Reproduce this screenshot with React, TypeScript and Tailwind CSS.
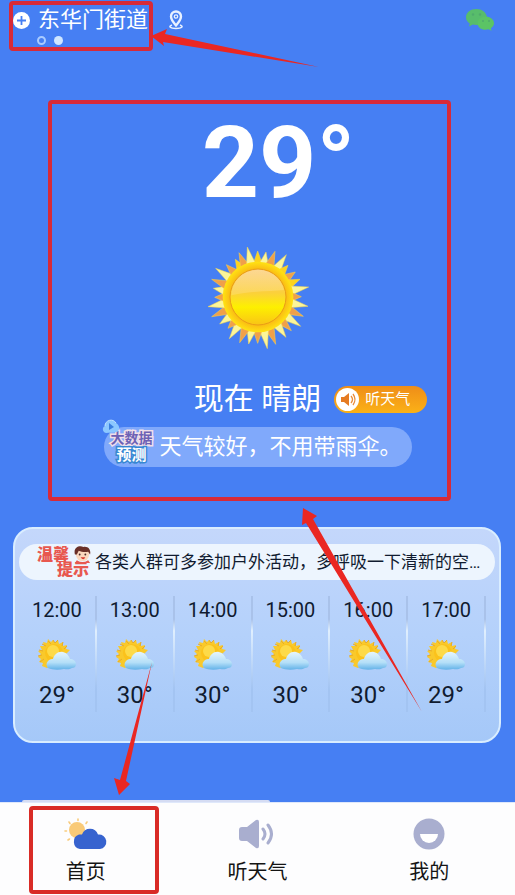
const FONT = "font-['Roboto','Noto_Sans_CJK_SC',sans-serif]";

const HOURS = [
  { time: "12:00", temp: 29 },
  { time: "13:00", temp: 30 },
  { time: "14:00", temp: 30 },
  { time: "15:00", temp: 30 },
  { time: "16:00", temp: 30 },
  { time: "17:00", temp: 29 },
];

type Ray = [number, number, string];

const PALE = "#fbf59a";
const GOLD = "#fdd31c";
const AMBER = "#f0a04a";

/* Ray tips of the big sun, clockwise, around the centre (188, 183). */
const RAYS: Ray[] = [
  [187, 45, GOLD], [212, 48, PALE], [239, 46, AMBER], [273, 56, PALE], [278, 88, GOLD],
  [300, 108, AMBER], [314, 130, GOLD], [340, 153, PALE], [318, 182, AMBER], [338, 211, PALE],
  [324, 241, AMBER], [316, 271, PALE], [288, 284, AMBER], [272, 304, PALE], [241, 325, AMBER],
  [216, 338, PALE], [187, 322, AMBER], [160, 324, PALE], [133, 320, AMBER], [102, 308, PALE],
  [98, 277, AMBER], [73, 264, PALE], [49, 242, AMBER], [38, 212, PALE], [58, 184, AMBER],
  [54, 157, PALE], [49, 130, AMBER], [61, 97, PALE], [93, 86, AMBER], [120, 70, GOLD],
  [131, 50, AMBER], [156, 33, PALE],
];

function rayPath([x, y]: Ray) {
  const a = Math.atan2(y - 183, x - 188);
  const p = (t: number, r: number) => `${(188 + r * Math.cos(t)).toFixed(1)} ${(183 + r * Math.sin(t)).toFixed(1)}`;
  return `M${p(a - 0.15, 98)}L${x} ${y}L${p(a + 0.15, 98)}Z`;
}

function BigSun() {
  return (
    <svg viewBox="26 21 324 324" className="size-[108px]" role="img" aria-label="晴朗">
      <defs>
        <radialGradient id="corona">
          <stop offset="0.75" stopColor="#f9b414" />
          <stop offset="1" stopColor="#ffe313" />
        </radialGradient>
        <linearGradient id="ember" x1="0" y1="0" x2="0" y2="1">
          <stop offset="0" stopColor="#fbcd7a" />
          <stop offset="0.42" stopColor="#fbd03c" />
          <stop offset="0.68" stopColor="#fdf000" />
          <stop offset="1" stopColor="#f9c416" />
        </linearGradient>
        <linearGradient id="shine" x1="0" y1="0" x2="0" y2="1">
          <stop offset="0" stopColor="#fff" stopOpacity="0.2" />
          <stop offset="1" stopColor="#fff" stopOpacity="0.15" />
        </linearGradient>
      </defs>
      {RAYS.map((ray) => (
        <path key={`${ray[0]}-${ray[1]}`} d={rayPath(ray)} fill={ray[2]} stroke="#fbd84a" strokeWidth="1.5" />
      ))}
      <circle cx="188" cy="183" r="106" fill="url(#corona)" />
      <circle cx="188" cy="183" r="84" fill="url(#ember)" stroke="#ea9d17" strokeWidth="3" />
      <path d="M108 178a80 78 0 0 1 158-16c-40 4-92 2-158 16Z" fill="url(#shine)" />
    </svg>
  );
}

function PartlyCloudy() {
  return (
    <svg viewBox="0 0 40 33" className="h-[33px] w-10" role="img" aria-label="多云">
      <defs>
        <linearGradient id="cloud" x1="0" y1="0" x2="0" y2="1">
          <stop offset="0" stopColor="#e6f5fd" />
          <stop offset="0.6" stopColor="#b4dff8" />
          <stop offset="1" stopColor="#63b2e8" />
        </linearGradient>
      </defs>
      <path
        d="M16 2l2 3 3-3 1 4 4-2 0 4 4-1-1 4 4 1-3 3-20 15-5-2 1-3-4-1 2-3-3-2 3-3-3-3 4-1-2-4 4 0-1-4 4 1 1-4 3 3z"
        fill="#f9c92b"
      />
      <path d="M16 2l2 3 3-3M11 3l3 3M5 6l4 2M2 12l4 1M1 18l4-1M3 24l4-3M26 4l-1 4M30 8l-3 3" stroke="#e6a92e" strokeWidth="1" fill="none" />
      <circle cx="17" cy="15" r="9" fill="#fbc21b" />
      <circle cx="16" cy="13" r="6" fill="#fdda48" />
      <path d="M11 30c-2-2-2-5 0-7 2-2 4-2 5-2 1-4 5-8 10-7 4 1 6 4 7 7 3 0 6 2 6 5s-2 4-4 4c-3 2-6 1-8 1-5 1-12 1-16-1Z" fill="url(#cloud)" />
    </svg>
  );
}

function HomeIcon() {
  return (
    <svg viewBox="0 0 44 32" className="h-8 w-11" aria-hidden="true">
      <g stroke="#f8cb7c" strokeWidth="1.6" strokeLinecap="round">
        <path d="M14 1v1.500M5 4l1 1.500M1 13h1.500M4 22l1.500-1M23 4l-1 1.500" />
      </g>
      <circle cx="13" cy="12" r="8" fill="#f9ca78" />
      <path d="M16 31a7.500 7.500 0 0 1-1-14.500h3a8.500 8.500 0 0 1 16 0 7.300 7.300 0 0 1 2 14.500Z" fill="#3763cf" />
    </svg>
  );
}

function SpeakerIcon() {
  return (
    <svg viewBox="0 0 36 32" className="h-8 w-9" aria-hidden="true">
      <path d="M3 9h5L17 2q3-1 3 2v24q0 3-3 2l-9-7H3q-3 0-3-3v-8q0-3 3-3Z" fill="#a9aecf" />
      <path d="M24 11q4 5 0 10M29 7q7 9 0 18" fill="none" stroke="#a9aecf" strokeWidth="3" strokeLinecap="round" />
    </svg>
  );
}

function SmileIcon() {
  return (
    <svg viewBox="0 0 32 32" className="size-8" aria-hidden="true">
      <circle cx="16" cy="16" r="15.500" fill="#a9aecf" />
      <path d="M7 16h18a9 9 0 0 1-18 0Z" fill="#fff" />
    </svg>
  );
}

function Header() {
  return (
    <header className="h-12 pt-2 pr-5 pl-[13px]">
      <div className="flex h-6 items-center">
        <button aria-label="添加城市" className="mr-2">
          <svg viewBox="0 0 17 17" className="size-[17px]">
            <circle cx="8.500" cy="8.500" r="8.500" fill="#fff" />
            <path d="M8.500 4v9M4 8.500h9" stroke="#467ff3" strokeWidth="1.800" />
          </svg>
        </button>
        <h1 className="text-[22px] leading-6 text-white">东华门街道</h1>
        <button aria-label="定位" className="ml-5">
          <svg viewBox="0 0 16 20" className="h-5 w-4" fill="none" stroke="#e8f1ff">
            <path d="M8 15.500C5 12 3 9.500 3 6.500a5 5 0 0 1 10 0C13 9.500 11 12 8 15.500Z" strokeWidth="2.400" />
            <circle cx="8" cy="6.500" r="1.700" strokeWidth="1.300" />
            <path d="M4 15c-4 1.500-2 3.500 4 3.500s8-2 4-3.500" strokeWidth="1.500" />
          </svg>
        </button>
        <button aria-label="微信" className="ml-auto">
          <svg viewBox="0 0 30 24" className="h-6 w-[30px]">
            <path d="M11.500 1C5.500 1 1 4.500 1 9.200c0 2.700 1.400 4.800 3.800 6.300L4 18.500l3.800-1.900c2 .5 4 .6 6 .1C17 15 19 12 22 9 21 4 17 1 11.500 1Z" fill="#58bd6b" />
            <path d="M20.500 8.500c-4.500 0-8 3-8 6.700s3.500 6.600 8 6.600c1 0 2-.2 3-.5l3 1.500-.7-2.600c2-1.300 3.200-3 3.200-5 0-3.700-3.800-6.700-8.500-6.700Z" fill="#5bc465" />
            <g fill="#4fab6c">
              <circle cx="8" cy="6.500" r="1.200" />
              <circle cx="15" cy="6.500" r="1.200" />
              <circle cx="18" cy="13" r="1" />
              <circle cx="24" cy="13" r="1" />
            </g>
          </svg>
        </button>
      </div>
      <div className="mt-1 ml-6 flex items-center gap-2">
        <span className="size-[9px] rounded-full border-2 border-[#a9cbff]" />
        <span className="size-[9px] rounded-full bg-[#cfe6ff]" />
      </div>
    </header>
  );
}

function CurrentWeather() {
  return (
    <section className="flex flex-col items-center text-white">
      <p className="mt-[63px] pl-[42px] text-[100px] leading-[104px] font-bold">29°</p>
      <div className="mt-7">
        <BigSun />
      </div>
      <div className="mt-7 grid h-10 w-full grid-cols-[1fr_auto_1fr] items-center">
        <h2 className="col-start-2 text-[30px] leading-10">现在 晴朗</h2>
        <button className="ml-[13px] flex h-[27px] w-[93px] items-center gap-1.5 rounded-full bg-linear-to-b from-[#ee8d18] to-[#fbb117] pl-0.5 text-[15px] leading-6">
          <svg viewBox="0 0 23 23" className="size-[23px]" aria-hidden="true">
            <circle cx="11.500" cy="11.500" r="11.500" fill="#fff" />
            <path d="M5 9h3l5-4v13l-5-4H5Z" fill="#e57b22" />
            <path d="M15 8q3 3.500 0 7M17 6q4 5.500 0 11" fill="none" stroke="#e98c38" strokeWidth="1.300" />
          </svg>
          听天气
        </button>
      </div>
      <div className="relative mt-2 flex h-10 w-[308px] items-center rounded-full bg-[#80a9fb] pl-[7px]">
        <svg viewBox="0 0 18 15" className="absolute -top-2 -left-0.5 h-[15px] w-[18px]" aria-hidden="true">
          <path d="M4 14C0 13 0 8 3 7c0-6 8-8 11-3 4 2 4 7 1 9Z" fill="#8cc8ff" />
          <path d="m7 4 5 4-5 3Z" fill="#3a7fe0" />
          <path d="M3 7c0-6 8-8 11-3" fill="none" stroke="#c3e6ff" />
        </svg>
        <p className="flex w-[42px] flex-col items-center text-sm leading-[17px] font-bold">
          <span className="text-[#6d62b5] [paint-order:stroke] [-webkit-text-stroke:3px_#f0dfe9]">大数据</span>
          <span className="text-[15px] leading-[17px] text-white [paint-order:stroke] [-webkit-text-stroke:3px_#3787d2]">预测</span>
        </p>
        <p className="ml-[7px] text-[22px] leading-8 whitespace-nowrap">天气较好，不用带雨伞。</p>
      </div>
    </section>
  );
}

function TipLabel() {
  return (
    <div className="relative w-[58px] shrink-0 text-base leading-[15px] font-black text-[#e8584f]">
      <p className="pl-0.5">温馨</p>
      <p className="pr-1 text-right">提示</p>
      <svg viewBox="0 0 18 18" className="absolute -top-px right-0.5 size-[17px]" aria-hidden="true">
        <circle cx="9" cy="9" r="7" fill="#fbd7bd" />
        <path d="M1 9C-1 2 5-1 10 1c6-1 8 4 7 8l-2-3c-4 1-7 0-10-1L3 9Z" fill="#6a3028" />
        <circle cx="6" cy="9" r="1" fill="#4d2a28" />
        <circle cx="12" cy="9" r="1" fill="#4d2a28" />
        <path d="M7 12h5q-2 4-5 0Z" fill="#d8392f" />
        <path d="M3 15q6 4 12 0l2 3H1Z" fill="#e8584f" />
      </svg>
    </div>
  );
}

function Forecast() {
  return (
    <section className="mt-[60px] mr-3.5 ml-[13px] rounded-[20px] border-2 border-[#d9edff] bg-linear-to-b from-[#c4d7fb] via-[#b4d1fb] to-[#a5c8f8] px-1 pt-[15px] pb-[29px] text-[#101b30]">
      <div className="flex h-9 items-center rounded-full bg-[#edf5fe] pl-4">
        <TipLabel />
        <p className="ml-0.5 truncate text-[17px] leading-6">各类人群可多参加户外活动，多呼吸一下清新的空…</p>
      </div>
      <ul className="mt-4 mr-[9px] grid grid-cols-6">
        {HOURS.map((h) => (
          <li key={h.time} className="flex">
            <div className="flex flex-1 flex-col items-center pb-[3px]">
              <span className="text-xl leading-7">{h.time}</span>
              <span className="mt-3.5">
                <PartlyCloudy />
              </span>
              <span className="mt-2.5 text-2xl leading-7">{h.temp}°</span>
            </div>
            <span className="w-0.5 bg-linear-to-b from-[#a9c2ea] from-20% via-[#e0effe] via-30% to-[#a3c4f2] to-80%" />
          </li>
        ))}
      </ul>
    </section>
  );
}

function TabBar() {
  const tabs = [
    { label: "首页", icon: <HomeIcon /> },
    { label: "听天气", icon: <SpeakerIcon /> },
    { label: "我的", icon: <SmileIcon /> },
  ];
  return (
    <div className="mt-auto">
      <div className="ml-[22px] h-0.5 w-[248px] rounded-t-full bg-[#d5dcf3]" />
      <nav className="grid grid-cols-3 border-t border-[#dfe8fb] bg-[#fdfdfe] pt-[15px] pb-[11px]">
        {tabs.map((t) => (
          <button key={t.label} className="flex flex-col items-center text-xl leading-6 text-[#141414]">
            {t.icon}
            <span className="mt-2.5">{t.label}</span>
          </button>
        ))}
      </nav>
    </div>
  );
}

/* Guide marks drawn over the page: three frames and the arrows that point at them. */
function Callouts() {
  return (
    <div className="pointer-events-none absolute inset-0" aria-hidden="true">
      <div className="absolute top-px left-[9px] h-[50px] w-[144px] rounded-sm border-4 border-[#d72a38]" />
      <div className="absolute top-[100px] left-12 h-[401px] w-[403px] rounded-sm border-4 border-[#d72a38]" />
      <div className="absolute top-[806px] left-[29px] h-[88px] w-[130px] rounded-sm border-4 border-[#d92b26]" />
      <svg viewBox="0 0 515 895" className="absolute top-0 left-0 h-[895px] w-[515px]" fill="#ea2722">
        <path d="M151 36 167 29 165 34 319 67 163 42 164 46Z" />
        <path d="M303 508 317 516 313 519 422 712 306 523 302 525Z" />
        <path d="M119 795 114 778 120 780 152 662 126 781 130 784Z" />
      </svg>
    </div>
  );
}

export default function App() {
  return (
    <div className={`relative flex min-h-screen flex-col overflow-hidden bg-[#467ff3] ${FONT}`}>
      <Header />
      <CurrentWeather />
      <Forecast />
      <TabBar />
      <Callouts />
    </div>
  );
}
